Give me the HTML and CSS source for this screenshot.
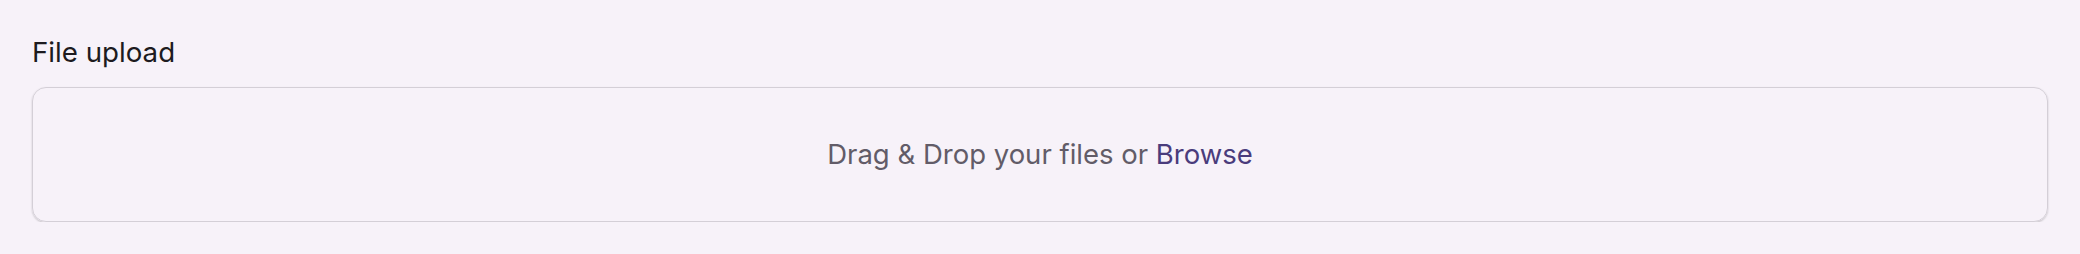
FILE: index.html
```html
<!DOCTYPE html>
<html lang="en">
<head>
<meta charset="utf-8">
<title>File upload</title>
<link rel="stylesheet" href="styles.css">
</head>
<body>
  <div class="field">
    <label class="field-label" for="file-input">File upload</label>
    <div class="dropzone">
      <span class="dropzone-text">Drag &amp; Drop your files or <span class="browse">Browse</span></span>
      <input id="file-input" class="file-input" type="file" multiple>
    </div>
  </div>
</body>
</html>
```

FILE: styles.css
```css
html, body {
  margin: 0;
  padding: 0;
  background: #f7f2f9;
}
body {
  font-family: Inter, "Noto Sans", "Liberation Sans", sans-serif;
  padding: 32px 32px 0 32px;
}
.field {
  display: flex;
  flex-direction: column;
  gap: 15px;
}
.field-label {
  font-size: 27.7px;
  line-height: 40px;
  color: #1d1b20;
  font-weight: 400;
}
.dropzone {
  border: 1px solid #d4cfd7;
  border-radius: 14px;
  box-shadow: 0 1px 2px rgba(0,0,0,0.2);
  display: flex;
  align-items: center;
  justify-content: center;
  box-sizing: border-box;
  height: 135px;
  padding-bottom: 2px;
}
.dropzone-text {
  font-size: 27.5px;
  color: #625c68;
}
.browse {
  color: #4a3c7c;
}
.file-input {
  display: none;
}
```
